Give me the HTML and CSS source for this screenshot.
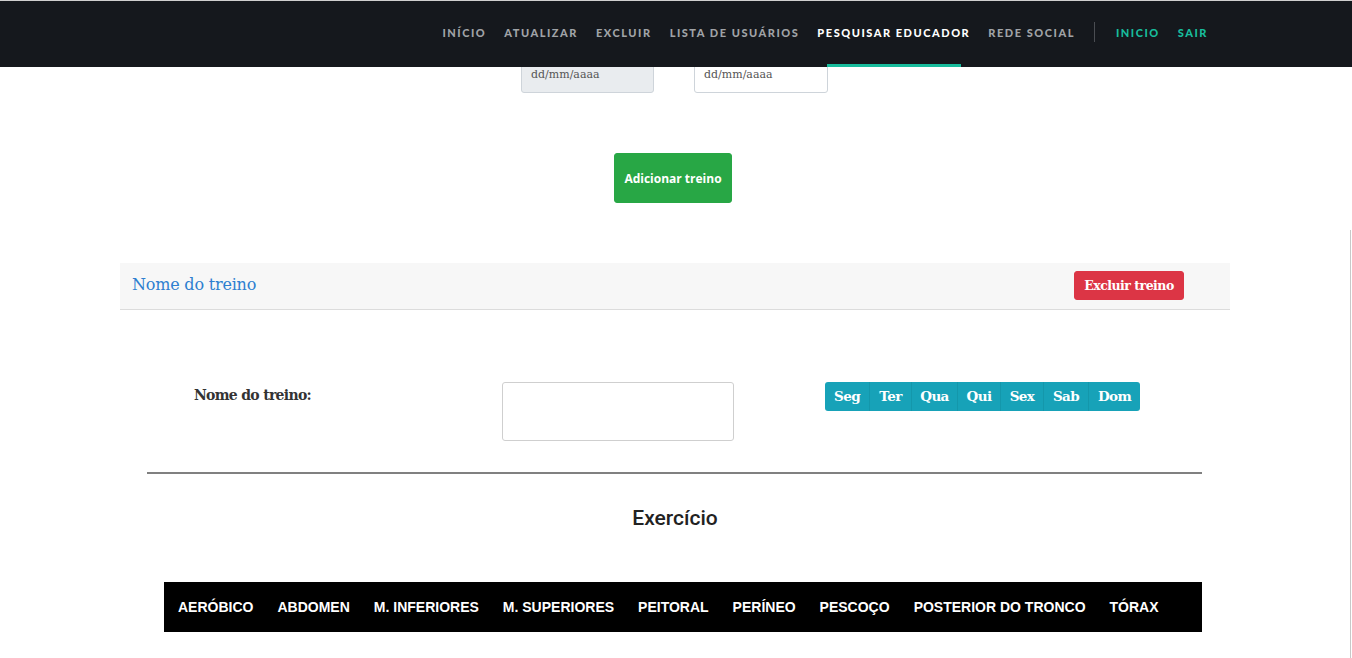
FILE: index.html
```html
<!DOCTYPE html>
<html lang="pt">
<head>
<meta charset="utf-8">
<title>Treinos</title>
<link rel="stylesheet" href="styles.css">
</head>
<body>
<nav class="navbar">
  <ul class="nav-links">
    <li><a href="#">INÍCIO</a></li>
    <li><a href="#">ATUALIZAR</a></li>
    <li><a href="#">EXCLUIR</a></li>
    <li><a href="#">LISTA DE USUÁRIOS</a></li>
    <li class="active"><a href="#">PESQUISAR EDUCADOR</a></li>
    <li><a href="#">REDE SOCIAL</a></li>
  </ul>
  <span class="nav-sep"></span>
  <ul class="nav-links nav-right">
    <li><a href="#">INICIO</a></li>
    <li><a href="#">SAIR</a></li>
  </ul>
</nav>

<main class="page">
  <div class="dates">
    <div class="date-input disabled">dd/mm/aaaa</div>
    <div class="date-input">dd/mm/aaaa</div>
  </div>

  <div class="add-row">
    <button class="btn-add">Adicionar treino</button>
  </div>

  <section class="card">
    <div class="card-header">
      <span class="card-title">Nome do treino</span>
      <button class="btn-danger">Excluir treino</button>
    </div>
    <div class="card-body">
      <div class="form-row">
        <label class="form-label">Nome do treino:</label>
        <div class="text-input"></div>
        <div class="days">
          <span class="day">Seg</span>
          <span class="day">Ter</span>
          <span class="day">Qua</span>
          <span class="day">Qui</span>
          <span class="day">Sex</span>
          <span class="day">Sab</span>
          <span class="day">Dom</span>
        </div>
      </div>
      <hr class="divider">
      <h2 class="ex-title">Exercício</h2>
      <ul class="ex-bar">
        <li>AERÓBICO</li>
        <li>ABDOMEN</li>
        <li>M. INFERIORES</li>
        <li>M. SUPERIORES</li>
        <li>PEITORAL</li>
        <li>PERÍNEO</li>
        <li>PESCOÇO</li>
        <li>POSTERIOR DO TRONCO</li>
        <li>TÓRAX</li>
      </ul>
    </div>
  </section>
</main>
<div class="scroll-thumb"></div>
</body>
</html>
```

FILE: styles.css
```css
* { box-sizing: border-box; }
html, body { margin: 0; padding: 0; }
body {
  background: #fff;
  font-family: "DejaVu Serif", serif;
  color: #333;
  width: 1352px;
  height: 658px;
  overflow: hidden;
}

.navbar {
  position: fixed;
  top: 0; left: 0; right: 0;
  height: 67px;
  background: #15181d;
  border-top: 1px solid #cfcfcf;
  display: flex;
  align-items: center;
  justify-content: flex-end;
  padding-right: 144px;
  z-index: 10;
}
.nav-links {
  list-style: none;
  margin: 0; padding: 0;
  display: flex;
  gap: 18px;
  height: 100%;
}
.nav-links li {
  position: relative;
  display: flex;
  align-items: center;
  padding-bottom: 4px;
}
.nav-links a {
  font-family: Lato, "DejaVu Sans", sans-serif;
  font-weight: 900;
  font-size: 11px;
  letter-spacing: 1.53px;
  color: #a0a3a7;
  text-decoration: none;
}
.nav-links .active a { color: #fff; }
.nav-links .active::after {
  content: "";
  position: absolute;
  left: 10px; right: 9px; bottom: 0;
  height: 3px;
  background: #18bc9c;
}
.nav-sep {
  width: 1px;
  height: 20px;
  background: #4a4d52;
  margin: -4px 21px 0 19px;
}
.nav-right a { color: #18bc9c; }

.page { padding-top: 55px; }

.dates {
  display: flex;
  justify-content: center;
  gap: 40px;
  padding-right: 3px;
}
.date-input {
  width: 134px;
  height: 38px;
  border: 1px solid #ced4da;
  border-radius: 3px;
  background: #fff;
  font-size: 11px;
  color: #555;
  padding: 0 9px;
  display: flex;
  align-items: center;
}
.date-input.disabled { background: #e9ecef; width: 133px; }

.add-row {
  display: flex;
  justify-content: center;
  padding-top: 60px;
  padding-right: 6px;
}
.btn-add {
  width: 118px;
  height: 50px;
  background: #28a745;
  border: 1px solid #28a745;
  border-radius: 3px;
  color: #fff;
  font-family: "Open Sans", sans-serif;
  font-weight: 700;
  font-size: 12px;
  letter-spacing: 0;
  padding: 0;
}

.card {
  width: 1110px;
  margin: 60px 0 0 120px;
}
.card-header {
  height: 47px;
  background: #f7f7f7;
  border-bottom: 1px solid #dcdcdc;
  display: flex;
  align-items: center;
  justify-content: space-between;
  padding: 0 46px 0 12px;
}
.card-title {
  color: #2e7fd0;
  font-size: 16px;
  letter-spacing: -0.2px;
  margin-top: -3px;
}
.btn-danger {
  width: 110px;
  height: 29px;
  background: #dc3545;
  border: 1px solid #dc3545;
  border-radius: 3px;
  color: #fff;
  font-family: "DejaVu Serif", serif;
  font-weight: 700;
  font-size: 12.5px;
  letter-spacing: -0.5px;
  padding: 0;
  margin-top: -2px;
}

.card-body { padding-top: 72px; }
.form-row {
  display: flex;
  align-items: flex-start;
}
.form-label {
  width: 382px;
  padding-left: 74px;
  padding-top: 5px;
  font-weight: 700;
  font-size: 14px;
  letter-spacing: -0.7px;
  color: #333;
}
.text-input {
  width: 232px;
  height: 59px;
  border: 1px solid #cfcfcf;
  border-radius: 3px;
  margin-right: 91px;
}
.days {
  display: flex;
  background: #17a2b8;
  border-radius: 3px;
  height: 29px;
}
.day {
  display: flex;
  align-items: center;
  justify-content: center;
  color: #fff;
  font-weight: 700;
  font-size: 13.5px;
  letter-spacing: -0.6px;
  border-left: 1px solid #1497ab;
  padding-bottom: 1px;
}
.day:first-child { border-left: none; }
.day:nth-child(1) { width: 44px; }
.day:nth-child(2) { width: 42px; }
.day:nth-child(3) { width: 46px; }
.day:nth-child(4) { width: 43px; }
.day:nth-child(5) { width: 43px; }
.day:nth-child(6) { width: 45px; }
.day:nth-child(7) { width: 52px; }

.divider {
  width: 1055px;
  margin: 31px 0 0 27px;
  border: none;
  border-top: 2px solid #808080;
  height: 0;
}
.ex-title {
  margin: 32px 0 0 0;
  text-align: center;
  font-family: Roboto, "Liberation Sans", sans-serif;
  font-weight: 500;
  font-size: 21px;
  color: #222;
  line-height: 24px;
}
.ex-bar {
  list-style: none;
  margin: 52px 0 0 44px;
  width: 1038px;
  height: 50px;
  background: #000;
  display: flex;
  align-items: center;
  gap: 24px;
  padding: 0 0 0 14px;
}
.ex-bar li {
  font-family: "Liberation Sans", Arial, sans-serif;
  font-weight: 700;
  font-size: 14px;
  color: #fff;
}

.scroll-thumb {
  position: fixed;
  right: 1px;
  top: 230px;
  width: 1px;
  height: 428px;
  background: #c8c8c8;
}
```
